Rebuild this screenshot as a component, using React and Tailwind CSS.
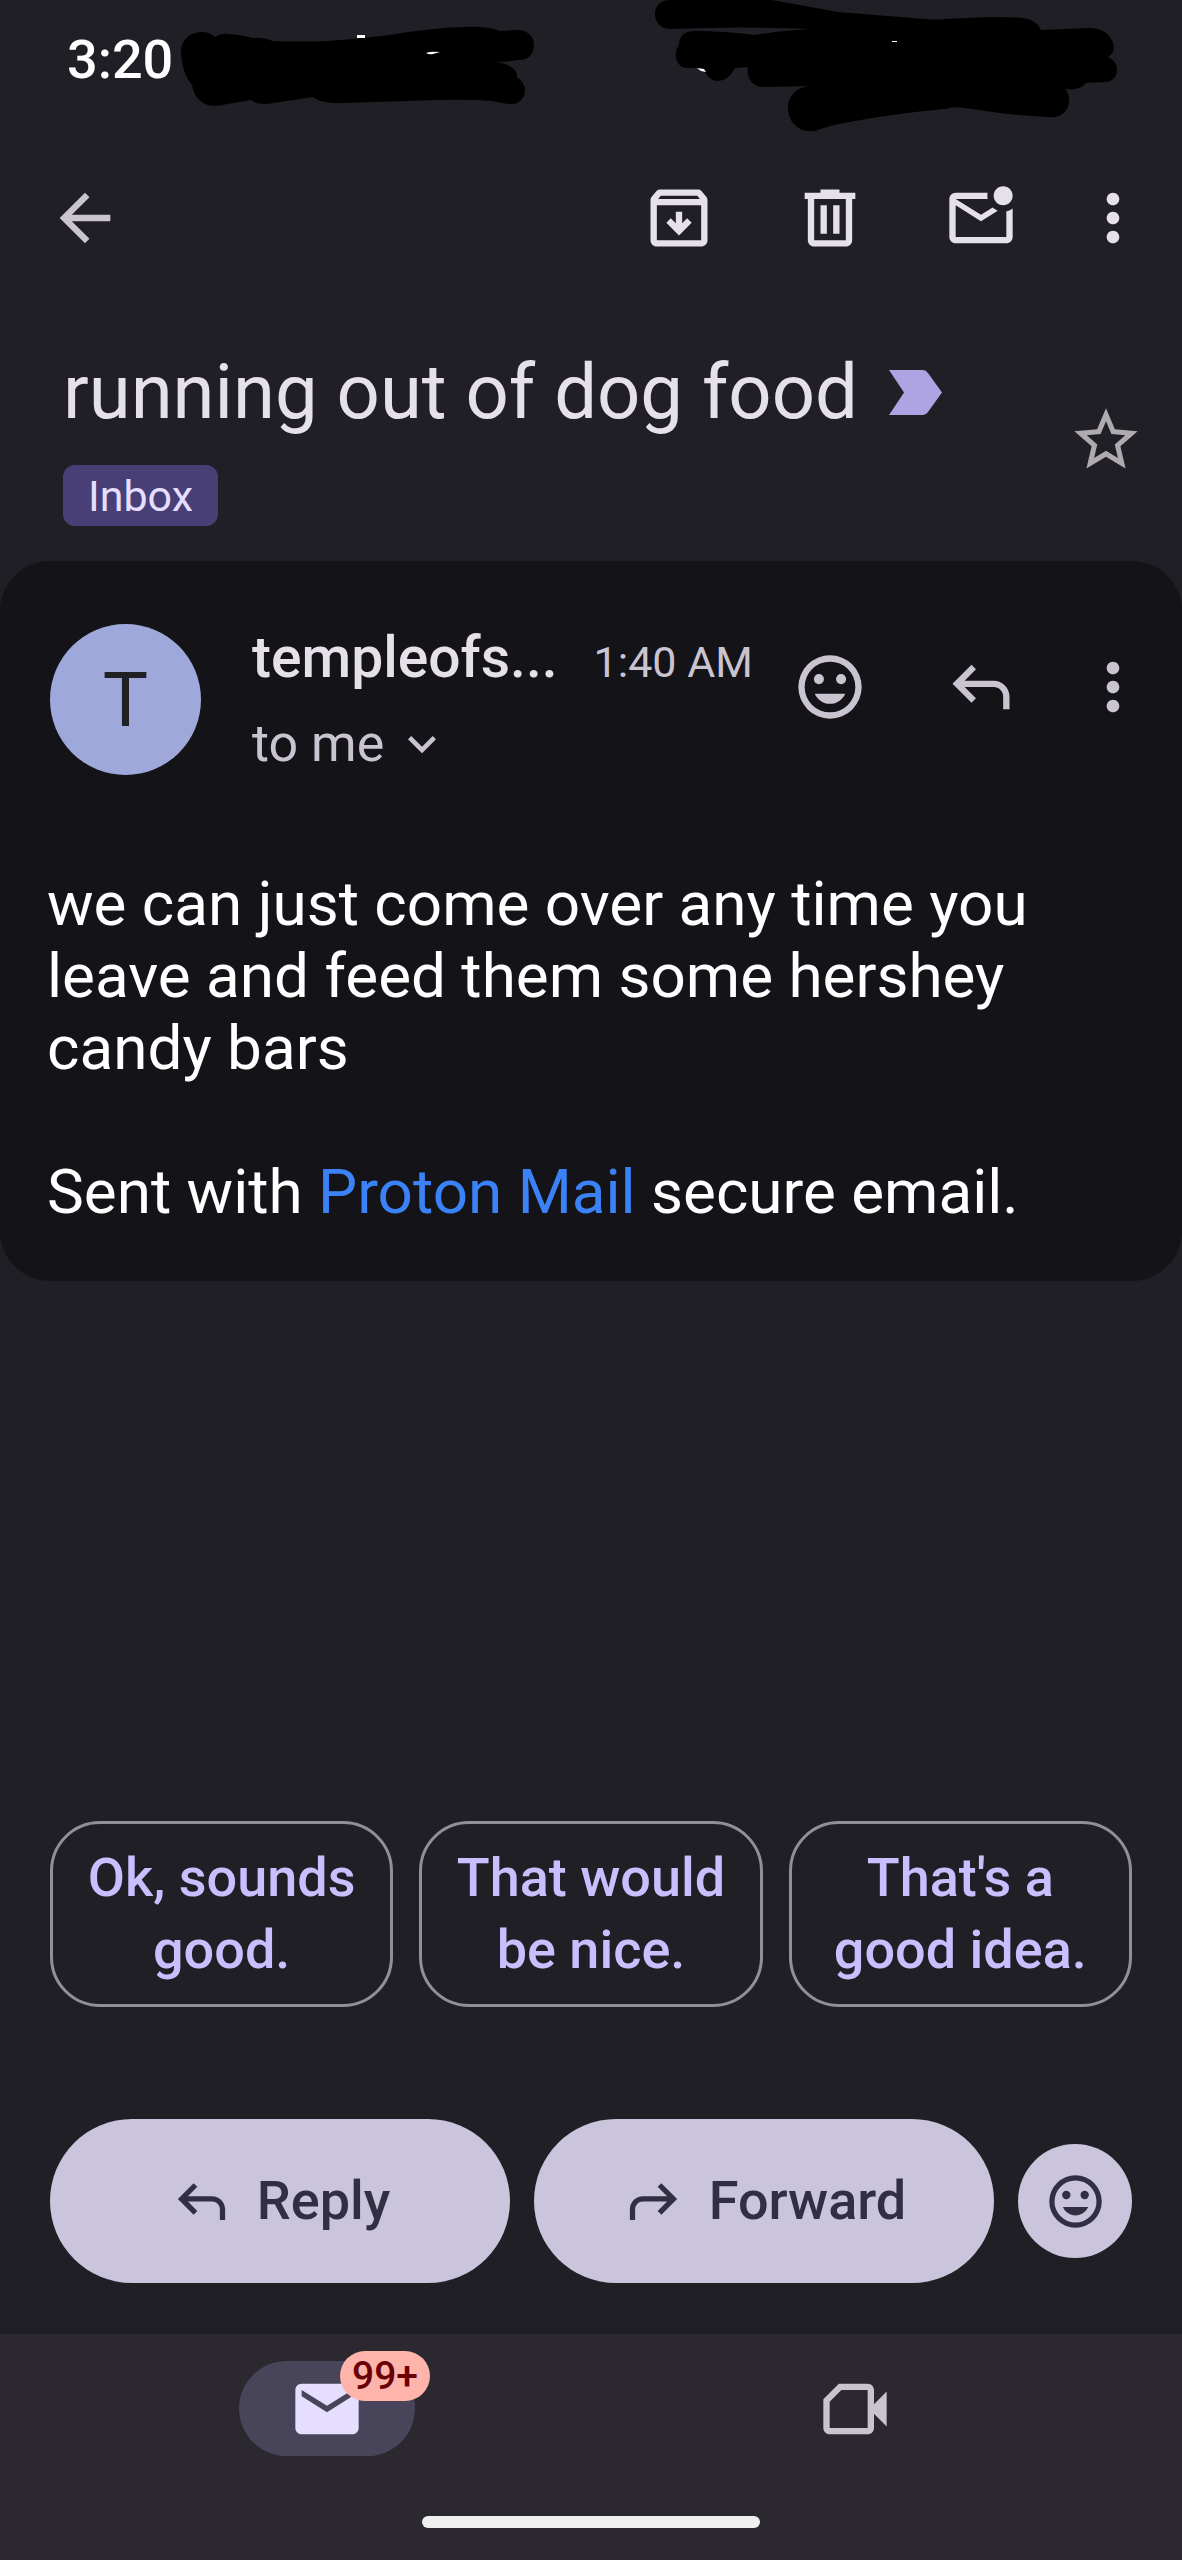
import clsx from "clsx";

const paths = {
    back: "M20 11H7.83l5.59-5.59L12 4l-8 8 8 8 1.41-1.41L7.83 13H20v-2z",
    archive:
        "M20.54 5.23l-1.39-1.68C18.88 3.21 18.47 3 18 3H6c-.47 0-.88.21-1.16.55L3.46 5.23C3.17 5.57 3 6.02 3 6.5V19c0 1.1.9 2 2 2h14c1.1 0 2-.9 2-2V6.5c0-.48-.17-.93-.46-1.27zM6.24 5h11.52l.83 1H5.42l.82-1zM5 19V8h14v11H5zm11-5.5l-4 4-4-4 1.41-1.41L11 13.67V10h2v3.67l1.59-1.59L16 13.5z",
    trash: "M15 4V3H9v1H4v2h1v13c0 1.1.9 2 2 2h10c1.1 0 2-.9 2-2V6h1V4h-5zm2 15H7V6h10v13zM9 8h2v9H9zm4 0h2v9h-2z",
    unread:
        "M22 8.98V18c0 1.1-.9 2-2 2H4c-1.1 0-2-.9-2-2V6c0-1.1.9-2 2-2h10.1c-.06.32-.1.66-.1 1 0 .34.04.68.1 1H4l8 5 3.67-2.29c.47.43 1.02.76 1.63.98L12 13 4 8v10h16V9.9c.74-.15 1.42-.48 2-.92zM16 5c0 1.66 1.34 3 3 3s3-1.34 3-3-1.34-3-3-3-3 1.34-3 3z",
    more: "M12 8c1.1 0 2-.9 2-2s-.9-2-2-2-2 .9-2 2 .9 2 2 2zm0 2c-1.1 0-2 .9-2 2s.9 2 2 2 2-.9 2-2-.9-2-2-2zm0 6c-1.1 0-2 .9-2 2s.9 2 2 2 2-.9 2-2-.9-2-2-2z",
    star: "M22 9.24l-7.19-.62L12 2 9.19 8.63 2 9.24l5.46 4.73L5.82 21 12 17.27 18.18 21l-1.63-7.03L22 9.24zM12 15.4l-3.76 2.27 1-4.28-3.32-2.88 4.38-.38L12 6.1l1.71 4.04 4.38.38-3.32 2.88 1 4.28L12 15.4z",
    smile: "M12 2a10 10 0 1 0 0 20 10 10 0 0 0 0-20zm0 18a8 8 0 1 1 0-16 8 8 0 0 1 0 16zM8.5 7.9a1.6 1.6 0 1 0 0 3.2 1.6 1.6 0 0 0 0-3.2zm7 0a1.6 1.6 0 1 0 0 3.2 1.6 1.6 0 0 0 0-3.2zM7.2 14.1h9.6c-.8 1.9-2.6 3.2-4.8 3.2s-4-1.3-4.8-3.2z",
    reply: "M19 19v-4c0-1.66-1.34-3-3-3H6.83l3.58 3.59L9 17l-6-6 6-6 1.41 1.41L6.83 10H16c2.76 0 5 2.24 5 5v4h-2z",
    forward: "M5 19v-4c0-1.66 1.34-3 3-3h9.17l-3.58 3.59L15 17l6-6-6-6-1.41 1.41L17.17 10H8c-2.76 0-5 2.24-5 5v4h2z",
    expand: "M16.59 8.59L12 13.17 7.41 8.59 6 10l6 6 6-6z",
    mail: "M20 4H4c-1.1 0-2 .9-2 2v12c0 1.1.9 2 2 2h16c1.1 0 2-.9 2-2V6c0-1.1-.9-2-2-2zm0 4l-8 5-8-5V6l8 5 8-5v2z",
    video: "M6.9 4H16c1.1 0 2 .9 2 2v4.5l4-4v11l-4-4V18c0 1.1-.9 2-2 2H4c-1.1 0-2-.9-2-2V8.9zM7.7 6L4 9.7V18h12V6z",
};

const quickReplies = ["Ok, sounds good.", "That would be nice.", "That's a good idea."];

function Icon({ name, className }) {
    return (
        <svg viewBox="0 0 24 24" fill="currentColor" fillRule="evenodd" aria-hidden="true" className={clsx("shrink-0", className)}>
            <path d={paths[name]} />
        </svg>
    );
}

function IconButton({ name, label, className }) {
    return (
        <button type="button" aria-label={label} className={clsx("shrink-0", className)}>
            <Icon name={name} className="size-[76px]" />
        </button>
    );
}

function StatusBar() {
    return (
        <div className="flex h-[133px] items-start pl-[67px] pr-[64px]">
            <time className="pt-7 text-[54px] leading-[64px] font-medium text-white">3:20</time>

            {/* Scribbled-out notification icons */}
            <svg viewBox="181 0 355 133" className="ml-[7px] h-[133px] w-[355px] shrink-0" aria-hidden="true">
                <path
                    fill="#000"
                    d="M182 52C182 41 190 32 203 32Q211 32 216 37Q222 33 230 34Q244 35 254 38Q264 37 274 41Q300 42 329 41Q355 39 383 36Q440 27 465 27Q488 26 501 31L519 30C529 30 535 37 535 45C535 55 528 61 519 60Q508 62 496 62C510 63 519 70 518 77Q526 83 526 90C526 98 520 104 513 104Q506 104 494 101Q470 99 440 100L344 103Q322 104 314 97L275 103Q259 106 252 100L223 105C205 109 195 98 193 85Q183 74 182 52z"
                />
                <rect x="358" y="35" width="8" height="3" fill="#fff" />
                <path fill="#fff" d="M427 53Q432 51 441 52L434 54Q430 55 427 53z" />
            </svg>

            <svg viewBox="655 0 463 133" className="ml-auto h-[133px] w-[463px] shrink-0" aria-hidden="true">
                <path
                    fill="#000"
                    d="M669 0H772L838 12L925 19Q935 20 945 19L990 17Q1010 17 1023 18Q1037 20 1041 30L1090 28Q1102 28 1109 36C1116 44 1115 53 1108 57Q1117 61 1117 70C1117 78 1111 82 1105 82L1086 83Q1080 91 1065 89Q1070 94 1069 103C1067 113 1060 118 1049 117Q1020 116 993 112L965 108Q956 106 945 109Q880 115 830 126L818 130C802 135 788 124 788 108C788 95 798 86 812 86L765 87C753 88 746 78 748 67L735 68Q728 81 718 81Q710 81 705 72L697 68H687C677 68 672 55 679 45Q679 32 693 31Q725 31 755 35Q785 30 812 29Q740 26 671 29C660 29 655 22 655 14C655 6 660 1 669 0z"
                />
                <path fill="#fff" d="M697 68L704 69L706 72L701 71zM892 41h5v1h-5z" />
            </svg>
        </div>
    );
}

function Toolbar() {
    return (
        <header className="flex items-center pt-[47px] pr-[31px] pl-[47px] text-[#e6e0e9]">
            <IconButton name="back" label="Back" className="text-[#cac4d0]" />
            <div className="ml-auto flex items-center gap-[75px]">
                <IconButton name="archive" label="Archive" />
                <IconButton name="trash" label="Delete" />
                <IconButton name="unread" label="Mark as unread" />
            </div>
            <IconButton name="more" label="More options" className="ml-[56px]" />
        </header>
    );
}

function Subject() {
    return (
        <div className="flex items-end justify-between pt-[92px] pr-[38px] pb-[35px] pl-[63px]">
            <div>
                <div className="flex items-center gap-[31px]">
                    <h1 className="text-[76px] leading-[88px] text-[#e6e0e9]">running out of dog food</h1>
                    <svg viewBox="0 0 53 45" className="h-[45px] w-[53px]" fill="#aea4e3" aria-hidden="true">
                        <path d="M0 0H34Q37 0 39 3L53 22.5L39 42Q37 45 34 45H0L15 22.5z" />
                    </svg>
                </div>
                <span className="mt-[29px] flex h-[61px] w-fit items-center rounded-xl bg-[#493f77] px-[25px] text-[43px] leading-[48px] text-[#e5deff]">
                    Inbox
                </span>
            </div>
            <IconButton name="star" label="Star" className="mb-12 text-[#aeaab0]" />
        </div>
    );
}

function Message() {
    return (
        <article className="rounded-[50px] bg-[#141318] pt-[63px] pb-[53px]">
            <div className="flex items-start pr-[31px] pl-[50px] text-[#cac4d0]">
                <div className="flex size-[151px] shrink-0 items-center justify-center rounded-full bg-[#9fa8da] text-[76px] text-[#202124]">
                    T
                </div>
                <div className="ml-[51px] pt-[2px]">
                    <div className="flex items-baseline gap-[36px]">
                        <h2 className="text-[57px] leading-[64px] font-medium text-[#e6e0e9]">templeofs...</h2>
                        <time className="text-[43px] leading-[48px]">1:40 AM</time>
                    </div>
                    <button type="button" className="mt-6 flex items-center gap-[10px] text-[52px] leading-[60px]">
                        to me
                        <Icon name="expand" className="size-[56px]" />
                    </button>
                </div>
                <div className="ml-auto flex items-center pt-[25px]">
                    <IconButton name="smile" label="Add reaction" />
                    <IconButton name="reply" label="Reply" className="ml-[75px]" />
                    <IconButton name="more" label="More message options" className="ml-[56px]" />
                </div>
            </div>

            <div className="mt-[93px] px-[47px] text-[62px] leading-[72px] text-white">
                <p>we can just come over any time you leave and feed them some hershey candy bars</p>
                <p className="mt-[72px]">
                    Sent with{" "}
                    <a href="#proton" className="text-[#3b82f6]">
                        Proton Mail
                    </a>{" "}
                    secure email.
                </p>
            </div>
        </article>
    );
}

function ReplyActions() {
    return (
        <div className="flex items-center gap-6 px-[50px] pt-[112px] pb-[51px] text-[54px] leading-[60px] font-medium text-[#322f44]">
            <button type="button" className="flex h-[164px] flex-1 items-center justify-center gap-6 rounded-full bg-[#cac4dc]">
                <Icon name="reply" className="size-[63px]" />
                Reply
            </button>
            <button type="button" className="flex h-[164px] flex-1 items-center justify-center gap-6 rounded-full bg-[#cac4dc]">
                <Icon name="forward" className="size-[63px]" />
                Forward
            </button>
            <button
                type="button"
                aria-label="Add emoji reaction"
                className="flex size-[114px] items-center justify-center rounded-full bg-[#cac4dc]"
            >
                <Icon name="smile" className="size-[63px]" />
            </button>
        </div>
    );
}

function BottomNav() {
    return (
        <footer className="bg-[#2b292f] pt-[27px] pb-[32px]">
            <nav className="grid grid-cols-2 justify-items-center px-[63px]">
                <button
                    type="button"
                    aria-label="Mail, 99+ unread"
                    className="relative flex h-[95px] w-[176px] items-center justify-center rounded-full bg-[#484459] text-[#e5deff]"
                >
                    <Icon name="mail" className="size-[76px]" />
                    <span className="absolute -top-[10px] -right-[15px] flex h-[50px] items-center rounded-full bg-[#ffb4ab] px-3 text-[39px] font-medium text-[#690005]">
                        99+
                    </span>
                </button>
                <button type="button" aria-label="Meet" className="flex h-[95px] w-[176px] items-center justify-center text-[#cac4d0]">
                    <Icon name="video" className="size-[76px]" />
                </button>
            </nav>
            <div className="mx-auto mt-[60px] h-3 w-[338px] rounded-full bg-[#f0f0f0]"></div>
        </footer>
    );
}

export default function App() {
    return (
        <div className="flex min-h-screen flex-col bg-[#201f25] font-['Roboto',sans-serif]">
            <StatusBar />
            <Toolbar />
            <main className="flex flex-1 flex-col">
                <Subject />
                <Message />
                <div className="mt-auto grid grid-cols-3 gap-[26px] px-[50px]">
                    {quickReplies.map((text) => (
                        <button
                            key={text}
                            type="button"
                            className="rounded-[50px] border-3 border-[#928f99] px-[26px] py-[18px] text-center text-[54px] leading-[72px] font-medium text-[#c8bfff]"
                        >
                            {text}
                        </button>
                    ))}
                </div>
                <ReplyActions />
            </main>
            <BottomNav />
        </div>
    );
}
